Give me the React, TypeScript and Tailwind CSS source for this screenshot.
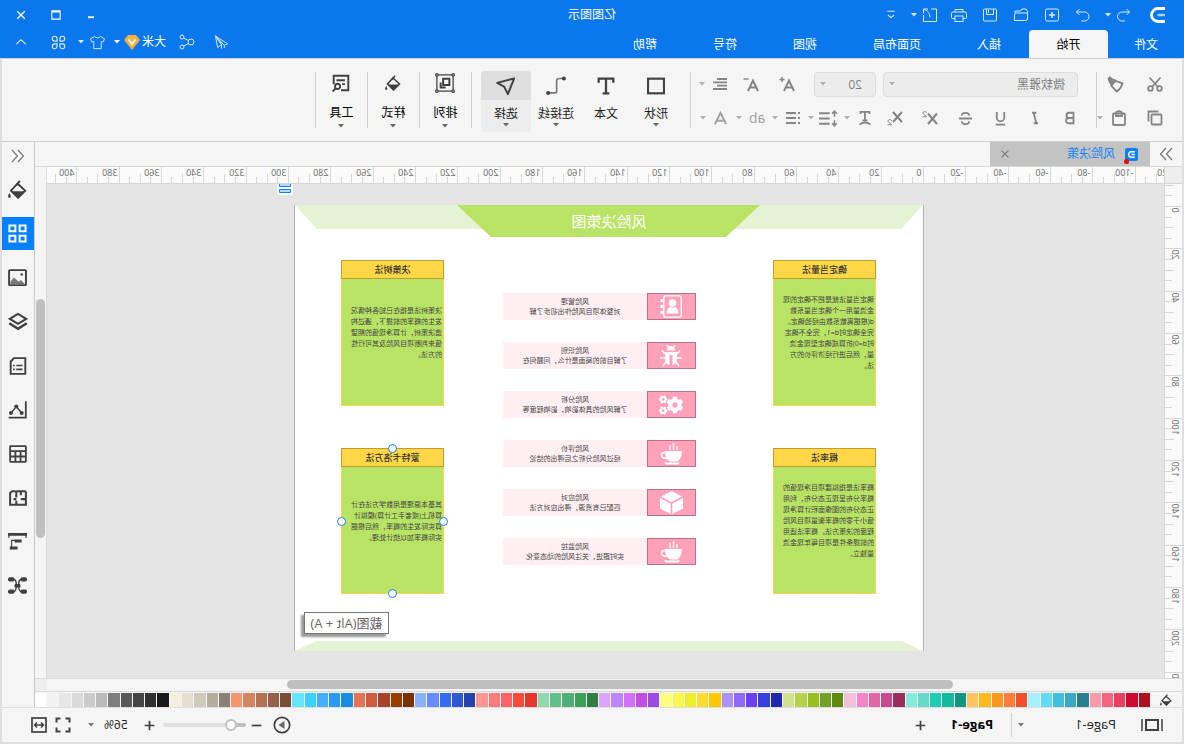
import React from "react";
import { FaCogs } from "react-icons/fa";

type IconProps = { size?: number; w?: number; children: React.ReactNode; className?: string };

function Ico({ size = 16, w = 1, children, className = "" }: IconProps) {
  return (
    <svg
      width={size}
      height={size}
      viewBox="0 0 16 16"
      fill="none"
      stroke="currentColor"
      strokeWidth={w}
      className={"shrink-0 " + className}
      aria-hidden="true"
    >
      {children}
    </svg>
  );
}

function Caret({ className = "" }: { className?: string }) {
  return (
    <svg width="6" height="4" viewBox="0 0 6 4" fill="currentColor" className={"shrink-0 " + className} aria-hidden="true">
      <path d="M0 0h6L3 3.6z" />
    </svg>
  );
}

type BtnProps = { label: string; className?: string; children: React.ReactNode };

function Btn({ label, className = "", children }: BtnProps) {
  return (
    <button type="button" aria-label={label} className={"flex shrink-0 items-center justify-center " + className}>
      {children}
    </button>
  );
}

/* ---------- title bar ---------- */

const quickTools: { label: string; icon: React.ReactNode }[] = [
  { label: "重做", icon: <path d="M11.5 2 14.5 5l-3 3M14.5 5H6.5a4.5 4.5 0 0 0 0 9h3" /> },
  { label: "新建", icon: <><rect x="1.5" y="2" width="13" height="12" rx="1.5" /><path d="M8 5v6M5 8h6" strokeWidth="1.5" /></> },
  { label: "打开", icon: <><path d="M1.5 13V4.5L3 2h4l1.500 2H14v2" /><path d="M1.5 6H12.5a2 2 0 0 1 2 2v5.500h-11a2 2 0 0 1-2-2z" /></> },
  { label: "保存", icon: <><rect x="1.5" y="2" width="13" height="12" rx="1" /><path d="M4.5 2v5.500h7V2M9.5 3v3" /></> },
  { label: "打印", icon: <><path d="M4 5V2.500h8V5M4 11.500H1.500a1 1 0 0 1-1-1V6.500A1.500 1.500 0 0 1 2 5h12a1.500 1.500 0 0 1 1.500 1.500v4a1 1 0 0 1-1 1H12" /><rect x="4" y="9" width="8" height="5.5" /></> },
];

function Header() {
  return (
    <header className="bg-[#0a78ec] text-white">
      <div className="grid h-[30px] grid-cols-[1fr_auto_1fr] items-center">
        <div className="flex items-center pl-[18px] text-[#d9eaff]">
          <svg width="16" height="16" viewBox="0 0 16 16" fill="none" className="mr-[15px] text-white" aria-hidden="true">
            <path d="M1 1.500h7a6.500 6.500 0 0 1 0 13H1" stroke="currentColor" strokeWidth="2.800" />
            <path d="M1 8h7.500" stroke="#9fd0ff" strokeWidth="2.500" />
          </svg>
          <Btn label="撤销" className="w-6"><Ico><path d="M4.500 2l-3 3 3 3M1.500 5H9a4.500 4.500 0 0 1 0 9h-3" /></Ico></Btn>
          <Caret className="mr-[6px]" />
          {quickTools.map((t) => (
            <Btn key={t.label} label={t.label} className="w-[31px]"><Ico>{t.icon}</Ico></Btn>
          ))}
          <Btn label="导出" className="w-[27px]">
            <Ico><path d="M7 2H1.500v12.500h13V8" /><path d="M10 2h4.500v4.500M14 2.500c-4 1-6 4-6 8" /></Ico>
          </Btn>
          <Caret />
          <Btn label="更多" className="ml-2 w-6"><Ico size={12}><path d="M3 3h10M4 8l4 3.500L12 8" strokeWidth="1.500" /></Ico></Btn>
        </div>
        <h1 className="text-xs">亿图图示</h1>
        <div className="flex items-center justify-end pr-1">
          <Btn label="最小化" className="w-[35px]"><Ico size={12}><path d="M4 11h8" strokeWidth="2.500" /></Ico></Btn>
          <Btn label="最大化" className="w-[35px]"><Ico size={12}><path d="M2.500 2.500h11v11h-11zM2 4h12" strokeWidth="1.400" /></Ico></Btn>
          <Btn label="关闭" className="w-[35px]"><Ico size={12}><path d="M3 3l10 10M13 3L3 13" strokeWidth="1.800" /></Ico></Btn>
        </div>
      </div>
      <div className="flex h-7">
        <nav className="flex text-xs">
          <button type="button" className="w-[76px] pt-[2px]">文件</button>
          <button type="button" className="w-[79px] rounded-t-sm bg-[#f5f5f5] pt-[2px] text-black">开始</button>
          {["插入", "页面布局", "视图", "符号", "帮助"].map((t) => (
            <button type="button" key={t} className="px-7 pt-[2px]">{t}</button>
          ))}
        </nav>
        <div className="ml-auto flex h-6 items-center pr-1 text-[#d9eaff]">
          <Btn label="发送" className="w-[34px]">
            <Ico size={15}><path d="M14.500 1 1.500 9.500l3.500 1.500zM14.500 1 12 13.500l-4-3.500zM14.500 1 8 10v4.500M5 11v3" /></Ico>
          </Btn>
          <Btn label="分享" className="w-[34px]">
            <Ico><circle cx="4" cy="8" r="3" /><circle cx="13" cy="3" r="2" /><circle cx="13" cy="13" r="2" /><path d="M6.500 6.500 11.500 4M6.500 9.500l5 2.500" /></Ico>
          </Btn>
          <button type="button" className="ml-1 flex items-center gap-[2px] text-xs text-white">
            大米
            <svg width="16" height="15" viewBox="0 0 16 15" aria-hidden="true">
              <path d="M4 0h8l4 5-8 10L0 5z" fill="#f5b041" />
              <path d="M4.500 4.500 8 9l3.500-4.500" stroke="#fff" strokeWidth="1.800" fill="none" />
            </svg>
            <Caret className="ml-[2px]" />
          </button>
          <Btn label="皮肤" className="ml-[5px] w-[22px]">
            <Ico size={15}><path d="M5 1.500C6 3.500 10 3.500 11 1.500L15.500 4 14 7.500 12 7v7.500H4V7l-2 .5L.5 4z" /></Ico>
          </Btn>
          <Caret className="ml-[3px]" />
          <Btn label="应用" className="w-[39px]">
            <Ico size={15} w={1.2}>
              <path d="M6.500 6.500h-3a2.600 2.600 0 1 1 3-3zM9.500 6.500h3a2.600 2.600 0 1 0-3-3zM6.500 9.500h-3a2.600 2.600 0 1 0 3 3zM9.500 9.500h3a2.600 2.600 0 1 1-3 3z" />
            </Ico>
          </Btn>
          <Btn label="收起功能区" className="w-[35px]"><Ico size={14}><path d="M2.500 10.500 8 5.500l5.500 5" strokeWidth="1.300" /></Ico></Btn>
        </div>
      </div>
    </header>
  );
}

/* ---------- ribbon ---------- */

function Split({ label, children }: { label: string; children: React.ReactNode }) {
  return (
    <div className="flex items-center">
      <Btn label={label} className="w-[26px]">{children}</Btn>
      <Btn label={label + "选项"} className="w-[10px] text-[#b0b0b0]"><Caret /></Btn>
    </div>
  );
}

function BigButton({ label, caret = true, active = false, children }: { label: string; caret?: boolean; active?: boolean; children: React.ReactNode }) {
  return (
    <button type="button" className={"flex h-[61px] w-[50px] flex-col items-center rounded-sm text-xs text-[#222] " + (active ? "bg-[#ededed]" : "")}>
      <span className={"flex h-[29px] w-full items-center justify-center rounded-t-sm text-[#404040] " + (active ? "bg-[#dedede]" : "")}>{children}</span>
      <span className="mt-[5px] leading-[18px]">{label}</span>
      {caret && <Caret className="text-[#666]" />}
    </button>
  );
}

function GroupButton({ label, children }: { label: string; children: React.ReactNode }) {
  return (
    <button type="button" className="flex h-14 w-[52px] flex-col items-center border-r border-[#cfcfcf] text-xs text-black">
      <span className="flex h-[22px] items-center text-[#404040]">{children}</span>
      <span className="mt-[11px] leading-[18px]">{label}</span>
      <Caret className="mt-[2px] text-[#666]" />
    </button>
  );
}

const selectBox = "h-[25px] w-full appearance-none rounded-sm border border-[#dcdcde] bg-[#ececec] text-xs text-[#808080]";

function Ribbon() {
  return (
    <section aria-label="功能区" className="flex h-[84px] items-start overflow-hidden border-x-2 border-t border-b border-x-[#dfdfdf] border-y-[#d0d0d0] bg-[#f5f5f5] pt-2">
      <div className="ml-[7px] flex flex-col text-[#858585]">
        <div className="flex h-[34px] items-center">
          <Btn label="剪切" className="w-10">
            <Ico w={1.8}><circle cx="3.500" cy="12.500" r="2.300" /><circle cx="12.500" cy="12.500" r="2.300" /><path d="M2.500 1.500 11 11M13.500 1.500 5 11" /></Ico>
          </Btn>
          <Btn label="格式刷" className="w-[38px]">
            <Ico size={17} w={1.8}><path d="M1.500 7 8 4.500 12 9 7 14.500C4.500 13 2.500 10.500 1.500 7z" /><path d="M7.500 3.500 11 2l2.500-2 2 2.500L14.500 5.500 12 9.500z" fill="currentColor" stroke="none" /></Ico>
          </Btn>
        </div>
        <div className="flex h-[34px] items-center">
          <Btn label="复制" className="w-10">
            <Ico w={1.8}><path d="M14.500 11.500v-10h-10" /><rect x="1.500" y="4.500" width="10" height="10" rx="1" /></Ico>
          </Btn>
          <Btn label="粘贴" className="w-[32px]">
            <Ico w={1.8}><rect x="2" y="3.500" width="12" height="11.500" rx="1" /><path d="M5 3.500C5 .5 11 .5 11 3.500V6H5z" /></Ico>
          </Btn>
          <Caret className="text-[#b0b0b0]" />
        </div>
      </div>
      <div className="mt-[5px] mr-2 h-14 w-px shrink-0 bg-[#cfcfcf]" />
      <div className="flex flex-col text-[#858585]">
        <div className="flex h-[34px] items-center pl-[10px]">
          <label className="relative w-[195px]">
            <select aria-label="字体" className={selectBox + " pl-3"} defaultValue="微软雅黑">
              <option>微软雅黑</option>
            </select>
            <Caret className="absolute top-[11px] right-[6px] text-[#b0b0b0]" />
          </label>
          <label className="relative ml-[7px] w-[62px]">
            <select aria-label="字号" className={selectBox + " pl-[13px]"} defaultValue="20">
              <option>20</option>
            </select>
            <Caret className="absolute top-[11px] right-[6px] text-[#b0b0b0]" />
          </label>
          <Btn label="增大字号" className="ml-[9px] w-9">
            <Ico><path d="M1 15 6 4.500 11 15M3 11.500h6" strokeWidth="2" /><path d="M13 1v5M10.500 3.500h5" strokeWidth="1.500" /></Ico>
          </Btn>
          <Btn label="减小字号" className="w-9">
            <Ico><path d="M1 15 6 4.500 11 15M3 11.500h6" strokeWidth="2" /><path d="M10.500 3h5" strokeWidth="1.500" /></Ico>
          </Btn>
          <Split label="对齐"><Ico w={1.8}><path d="M1 3h10M1 6.300h14M1 9.700h10M1 13h14" /></Ico></Split>
        </div>
        <div className="flex h-[34px] items-center">
          <Btn label="加粗" className="w-[35px]"><Ico size={14} w={2.1}><path d="M4 2h5a2.900 2.900 0 0 1 0 6H4zM4 8h5.500a3 3 0 0 1 0 6H4z" /></Ico></Btn>
          <Btn label="斜体" className="w-[35px]"><Ico size={14} w={2.1}><path d="M6.500 2h5M4.500 14h5M9.500 2l-3 12" /></Ico></Btn>
          <Btn label="下划线" className="w-[35px]"><Ico size={15} w={1.9}><path d="M4 1v6a4 4 0 0 0 8 0V1M3 14.500h10" /></Ico></Btn>
          <Btn label="删除线" className="w-[35px]"><Ico size={15} w={1.9}><path d="M12 5C12 1 4 1 4 5M4 11c0 4 8 4 8 0M1 8h14" /></Ico></Btn>
          <Btn label="上标" className="w-[35px]"><Ico><path d="M1 3.500 10 14M10 3.500 1 14" strokeWidth="2" /><path d="M11.500 3.200c0-2.200 3.500-2.200 3.500 0 0 1.500-3.500 2-3.500 3.600H15.500" /></Ico></Btn>
          <Btn label="下标" className="w-[35px]"><Ico><path d="M1 2 10 12M10 2 1 12" strokeWidth="2" /><path d="M11.500 11.200c0-2.200 3.500-2.200 3.500 0 0 1.500-3.500 2-3.500 3.600H15.500" /></Ico></Btn>
          <Split label="文字方向"><Ico w={1.8}><path d="M3.500 4V1.800h9V4M8 2v8.500M5.500 10.500h5" /><path d="M2.500 14.500c3-2.500 8-2.500 11 0" /></Ico></Split>
          <Split label="行距"><Ico size={19} w={1.7}><path d="M7 3.500h9M7 8h9M7 12.500h9" /><path d="M3 2v4.500M3 9.500V14M1 4l2-2.200L5 4M1 12l2 2.200L5 12" strokeWidth="1.300" /></Ico></Split>
          <Split label="项目符号"><Ico w={1.9}><path d="M1 3h2M1 8h2M1 13h2M5 3h10M5 8h10M5 13h10" /></Ico></Split>
          <Split label="大小写"><span className="text-sm leading-5 font-medium text-[#a0a0a0]">ab</span></Split>
          <Split label="文字颜色"><Ico size={15} w={2.1} className="text-[#a0a0a0]"><path d="M2 14 8 2l6 12M4.500 10.500h7" /></Ico></Split>
        </div>
      </div>
      <div className="mt-[5px] mr-[9px] ml-[6px] h-14 w-px shrink-0 bg-[#cfcfcf]" />
      <div className="mt-[4px] flex">
        <BigButton label="形状"><Ico size={18} w={1.9}><rect x="0.900" y="1.500" width="14.200" height="13" /></Ico></BigButton>
        <BigButton label="文本" caret={false}><Ico size={18} w={2}><path d="M1.500 5V1.500h13V5M8 1.500v13M5 14.500h6" /></Ico></BigButton>
        <BigButton label="连接线">
          <Ico size={20} w={1.3}><path d="M2 2h3.500a2 2 0 0 1 2 2v8.500a1 1 0 0 0 1 1H14" className="text-[#777]" stroke="currentColor" /><g fill="currentColor" stroke="none"><circle cx="1.700" cy="2" r="1.600" /><circle cx="14.300" cy="13.500" r="1.600" /></g></Ico>
        </BigButton>
        <BigButton label="选择" active><Ico size={20} w={1.6}><path d="M1.500 2 15 5.500 9.500 8.500 6.500 14.500z" strokeLinejoin="round" /></Ico></BigButton>
      </div>
      <div className="mt-[5px] ml-[9px] flex border-l border-[#cfcfcf]">
        <GroupButton label="排列">
          <Ico size={20}><path d="M1.500 1.500h13v13h-13z" /><path d="M4.500 4.500h5v5h-5zM11.500 7.500v4H7.500" strokeWidth="1.600" /><g fill="#f5f5f5"><circle cx="1.500" cy="1.500" r="1" /><circle cx="14.500" cy="1.500" r="1" /><circle cx="1.500" cy="14.500" r="1" /><circle cx="14.500" cy="14.500" r="1" /></g></Ico>
        </GroupButton>
        <GroupButton label="样式"><Bucket size={16} /></GroupButton>
        <GroupButton label="工具">
          <Ico size={18} w={1.7}><path d="M14.500 9V1.500h-13v13H8M4.500 5.500h7.500M4.500 9h2.500" /><circle cx="11" cy="11" r="2.300" /><path d="M12.800 12.800 15.500 15.500" /></Ico>
        </GroupButton>
      </div>
    </section>
  );
}

function Bucket({ size = 20 }: { size?: number }) {
  return (
    <Ico size={size} w={1.6}>
      <path d="M8 3 1.500 9 7.500 15 13.500 9z" />
      <path d="M2 9.500h11L7.500 15z" fill="currentColor" stroke="none" />
      <path d="M14.800 11c1.600 2.500 1.400 4 0 4s-1.600-1.500 0-4z" fill="currentColor" stroke="none" />
      <path d="M6 .8 9 4.500" />
    </Ico>
  );
}

/* ---------- rulers ---------- */

const UNIT = 2.117;

function rulerMarks(from: number, to: number): number[] {
  const out: number[] = [];
  for (let v = from; v <= to; v += 5) out.push(v);
  return out;
}

function HRuler() {
  return (
    <svg className="block h-[17px] w-full bg-[#fafafa]" aria-hidden="true">
      {rulerMarks(-120, 900).map((v) => {
        const x = Math.round(241 + v * UNIT) - 0.5;
        const top = v % 20 === 0 ? 0 : v % 10 === 0 ? 7 : 10;
        return (
          <g key={v}>
            <line x1={x} x2={x} y1={top} y2={17} stroke="#d6d6d6" />
            {v % 20 === 0 && v <= 400 && <text x={x + 2} y={9} fontSize={9} fill="#6a6a6a">{v}</text>}
          </g>
        );
      })}
    </svg>
  );
}

function VRuler() {
  return (
    <svg className="block h-full w-[17px] bg-[#fafafa]" aria-hidden="true">
      {rulerMarks(-10, 600).map((v) => {
        const y = Math.round(22 + v * UNIT) + 0.5;
        const left = v % 20 === 0 ? 0 : v % 10 === 0 ? 8 : 10;
        return (
          <g key={v}>
            <line x1={left} x2={17} y1={y} y2={y} stroke="#d6d6d6" />
            {v % 20 === 0 && v <= 220 && (
              <text transform={`translate(10 ${y + 1}) rotate(-90)`} textAnchor="end" fontSize={9} fill="#6a6a6a">{v}</text>
            )}
          </g>
        );
      })}
    </svg>
  );
}

/* ---------- diagram ---------- */

type CardProps = { title: string; lines: string[]; place: string; selected?: boolean };

function Card({ title, lines, place, selected = false }: CardProps) {
  const handle = "absolute size-[9px] rounded-full border border-[#1a80f0] bg-white";
  return (
    <article className={"absolute flex h-[146px] w-[103px] flex-col bg-[#b9e365] " + place}>
      <h3 className="h-[19px] border border-[#bf9b30] bg-[#ffd746] text-center text-[9px] leading-[17px] font-medium text-[#333]">{title}</h3>
      <p className="flex flex-1 flex-col justify-center border border-t-0 border-[#f0da50] pb-[19px] pl-px text-[7px] leading-[11px] whitespace-nowrap text-[#444]">
        {lines.map((l) => (
          <span key={l}>{l}</span>
        ))}
      </p>
      {selected && (
        <>
          <i className={handle + " -top-1 left-[47px]"} />
          <i className={handle + " -bottom-1 left-[47px]"} />
          <i className={handle + " top-[69px] -left-1"} />
          <i className={handle + " top-[69px] -right-1"} />
        </>
      )}
    </article>
  );
}

const cards: CardProps[] = [
  {
    title: "确定当量法",
    place: "left-[47px] top-[55px]",
    lines: ["确定当量法就是把不确定的现", "金流量用一个确定当量系数", "d(根据离散系数由经验确定。", "完全确定时d=1，完全不确定", "时d=0)折算成确定型现金流", "量，然后进行经济评价的方", "法。"],
  },
  {
    title: "决策树法",
    place: "left-[479px] top-[55px]",
    lines: ["决策树法是指在已知各种情况", "发生的概率的前提下，通过构", "造决策树，计算净现值的期望", "值来判断项目风险及其可行性", "的方法。"],
  },
  {
    title: "概率法",
    place: "left-[47px] top-[243px]",
    lines: ["概率法是指拟建项目净现值的", "概率分布呈现正态分布，利用", "正态分布的图像面积计算净现", "值小于零的概率衡量项目风险", "程度的决策方法。概率法适用", "的前提条件是项目每年现金流", "量独立。"],
  },
  {
    title: "蒙特卡洛方法",
    place: "left-[479px] top-[243px]",
    selected: true,
    lines: ["其基本原理是用数学方法在计", "算机上(或者手工计算)模拟计", "算实际发生的概率，然后根据", "实际概率加以统计处理。"],
  },
];

function Cup() {
  return (
    <svg width="22" height="22" viewBox="0 0 22 22" fill="#fff" aria-hidden="true">
      <path d="M0 8h17c0 6-2.500 9-5 10.500H5C2 17 0 13 0 8zM2 19.500h16l-1.500 2h-13z" />
      <path d="M16.500 9.500c5.500-1 5.500 6-1.500 6" fill="none" stroke="#fff" strokeWidth="1.500" />
      <path d="M5 3v4M8.500 0v7M12 2v5" stroke="#ffe4ea" strokeWidth="1.700" />
    </svg>
  );
}

function Contact() {
  return (
    <svg width="22" height="23" viewBox="0 0 22 23" fill="#fff" aria-hidden="true">
      <rect x="0.800" y="0.800" width="17.400" height="21.400" rx="2" fill="none" stroke="#fff" strokeWidth="1.300" />
      <circle cx="9.500" cy="8" r="3.800" />
      <path d="M3.500 18.500c0-4 2-6.500 4-6.500 1 .8 3 .8 4 0 2 0 4 2.500 4 6.500z" />
      <path d="M19 4h2.500v3H19zM19 10h2.500v3H19zM19 16h2.500v3H19z" />
    </svg>
  );
}

function Beetle() {
  return (
    <svg width="22" height="22" viewBox="0 0 22 22" fill="#fff" aria-hidden="true">
      <path d="M7 5.500a4 4.500 0 0 1 8 0zM5 7h12v7c0 3-2 5.500-4.500 6V10h-3v10C7 19.500 5 17 5 14z" />
      <path d="M8.500 2.500 7 0M13.500 2.500 15 0M5 9 2 5.500M17 9l3-3.500M5 13H0M17 13h5M6 17l-3 4M16 17l3 4" stroke="#fff" strokeWidth="1.400" />
    </svg>
  );
}

function Cube() {
  return (
    <svg width="23" height="23" viewBox="0 0 23 23" fill="#fff" aria-hidden="true">
      <path d="M11.500 0 22 5.500 11.500 11 1 5.500zM0 7l10.700 5.500V23L0 17.500zM23 7l-10.700 5.500V23L23 17.500z" />
    </svg>
  );
}

const steps: { title: string; text: string; icon: React.ReactNode }[] = [
  { title: "风险管理", text: "对整体项目风险作出初步了解", icon: <Contact /> },
  { title: "风险识别", text: "了解目前的局面是什么，问题何在", icon: <Beetle /> },
  { title: "风险分析", text: "了解风险的具体影响，影响程度等", icon: <FaCogs size={24} color="#fff" /> },
  { title: "风险评价", text: "经过风险分析之后得出的结论", icon: <Cup /> },
  { title: "风险应对", text: "匹配已有资源，得出应对方法", icon: <Cube /> },
  { title: "风险监控", text: "实时跟进，关注风险的动态变化", icon: <Cup /> },
];

function Diagram() {
  return (
    <div className="absolute top-[21px] left-[240px] h-[446px] w-[630px] border-x border-[#b0b0b0] bg-white">
      <svg className="absolute inset-0" width="628" height="446" viewBox="0 0 628 446" aria-hidden="true">
        <path d="M0 0h628l-22 24H22z" fill="#e5f3d5" />
        <path d="M163 0h303l-34 32H197z" fill="#b9e365" />
        <path d="M21 436h586l21 10H0z" fill="#e5f3d5" />
      </svg>
      <h2 className="relative text-center text-[15px] leading-8 text-white">风险决策图</h2>
      {cards.map((c) => (
        <Card key={c.title} {...c} />
      ))}
      <ol className="absolute top-[88px] left-[227px] flex flex-col gap-[22px]">
        {steps.map((s) => (
          <li key={s.title} className="flex h-[27px] w-[193px]">
            <span className="flex w-[49px] shrink-0 items-center justify-center border border-[#b9728a] bg-[#ffa2b9]">{s.icon}</span>
            <span className="flex flex-1 flex-col justify-center bg-[#ffeff3] text-center text-[7px] leading-[10px] whitespace-nowrap text-[#444]">
              <span>{s.title}</span>
              <span>{s.text}</span>
            </span>
          </li>
        ))}
      </ol>
      <div role="tooltip" className="absolute top-[407px] left-[534px] h-[22px] w-[85px] border border-[#777] bg-white text-center text-[13px] leading-5 whitespace-nowrap text-[#666] shadow-[3px_3px_2px_#999]">
        截图(Alt + A)
      </div>
    </div>
  );
}

/* ---------- palette ---------- */

const palette = (
  "b01020 cc0a2f e8405f f56580 f99aab 287f91 38a8c4 40c0de 60dcf2 a5effe f15025 ff7d3b ff971c ffba18 fec55f " +
  "129683 16b8a0 1bcdb2 66d9c8 85ecdb 9b2c5e c44b8d e265aa f884c8 f0c0dd 5f8a10 74a027 98bf20 b3d24a d3e090 " +
  "1f28b0 3340dc 6c40f2 8f6af7 ab91f8 fcc900 fcdd30 f0ec2c faf64c fdfd82 9a4be0 c24fe4 d36ffa bf85fe dba4ff " +
  "308044 3ca057 50ae78 62be8a 93d8ac e8362c fc4b3c fb6466 ff7a7a ff9490 2443a8 2f58d2 336cf2 658dff 8ab0f5 " +
  "7a3000 993a00 a84228 cf5c3e e37356 198cde 2b9af4 42b0fe 3dd2fe 66e5ff 7a4e36 96604a b4714f d4855f f4966c " +
  "8a8076 b2ad9c cfcbba e4dfd0 f4eedc 1a1a1a 303030 454545 5a5a5a 7d7d7d bbbbbb cbcbcb dadada e7e7e7 f2f2f2 ffffff"
).split(" ");

/* ---------- side tools ---------- */

const sideTools: { label: string; icon: React.ReactNode }[] = [
  { label: "填充", icon: <Bucket size={19} /> },
  { label: "符号库", icon: <Ico size={19} w={1.7}><path d="M1.200 1.200h5v5h-5zM9.800 1.200h5v5h-5zM1.200 9.800h5v5h-5zM9.800 9.800h5v5h-5z" /></Ico> },
  { label: "图片", icon: <Ico size={19} w={1.6}><rect x="0.900" y="1.800" width="14.200" height="12.600" rx="0.500" /><path d="M2 13.500 5 10l2 1.500L11 8l3 3.500v2z" fill="#777" stroke="none" /><circle cx="4.500" cy="5.500" r="1" fill="currentColor" stroke="none" /></Ico> },
  { label: "图层", icon: <Ico size={20} w={1.6}><path d="M8 1.500 14.500 5.500 8 9.500 1.500 5.500z" /><path d="M1 9l7 4.500L15 9" strokeWidth="2" /></Ico> },
  { label: "页面", icon: <Ico size={18} w={1.7}><path d="M1.500 1h10l3 3v11h-13z" /><path d="M4 7.500h5.500M4 11h5.500M10.800 7.500h1.500M10.800 11h1.500" strokeWidth="1.400" /></Ico> },
  { label: "图表", icon: <Ico size={19} w={1.5}><path d="M1 1v13.800h14.500" /><path d="M4.500 11 9 5.500 13.500 11" strokeWidth="1.200" /><g fill="currentColor" stroke="none"><circle cx="4.500" cy="11" r="1.700" /><circle cx="9" cy="5.500" r="1.700" /><circle cx="13.500" cy="11" r="1.700" /></g></Ico> },
  { label: "表格", icon: <Ico size={18} w={1.6}><rect x="1" y="1" width="14" height="14" rx="0.500" /><path d="M1 5.500h14M1 10.200h14M5.700 5.500V15M10.300 5.500V15" /></Ico> },
  { label: "平面图", icon: <Ico size={18} w={1.8}><path d="M5.500 2v3.500M1 2h8.500M10 2h3l2 1.500V14H1V2M1 9h4.500M9.500 14v-3.500M9.500 2v5.500M9.500 9H12" /></Ico> },
  { label: "甘特图", icon: <Ico size={19} w={2}><path d="M0 2h16M4.500 7.500h6M8 13.500H14.500" strokeWidth="2.500" /><path d="M.8 2v3M15.200 2v3M10 7h3v6" strokeWidth="1" /></Ico> },
  { label: "思维导图", icon: <Ico size={19}><g fill="currentColor" stroke="none"><rect x="0" y="1" width="5.500" height="3.600" rx="1.500" /><rect x="10.500" y="1" width="5.500" height="3.600" rx="1.500" /><rect x="0" y="11.400" width="5.500" height="3.600" rx="1.500" /><rect x="10.500" y="11.400" width="5.500" height="3.600" rx="1.500" /><rect x="5.500" y="6.800" width="5" height="2.800" rx="1" /></g><path d="M5 3c1.500 0 2 1 2 4.500S6 13 5 13M11 3c-1.500 0-2 1-2 4.500S10 13 11 13" strokeWidth="1.200" /></Ico> },
];

function Workspace() {
  return (
    <main className="flex min-h-0 flex-1 border-x-2 border-[#dfdfdf] bg-[#f5f5f5]">
      <div className="flex min-w-0 flex-1 flex-col">
        <div className="flex h-[25px] border-b border-[#d8d8d8] text-[#777]">
          <Btn label="展开左侧面板" className="w-8">
            <svg width="14" height="14" viewBox="0 0 14 14" fill="none" stroke="currentColor" strokeWidth="1.200" aria-hidden="true">
              <path d="M1 1l5.500 6L1 13M7 1l5.500 6L7 13" />
            </svg>
          </Btn>
          <div className="flex w-[160px] items-center bg-[#c3c3c3] pl-3">
            <span className="relative flex size-[13px] items-center justify-center rounded-[2px] bg-[#0b80f8]">
              <Ico size={9} w={2.5} className="text-white"><path d="M2 3h6a5 5 0 0 1 0 10H2M2 8h6" /></Ico>
              <i className="absolute -right-px -bottom-[3px] size-[5px] rounded-full bg-[#f00000]" />
            </span>
            <button type="button" className="ml-[10px] text-xs text-[#1383f5]">风险决策</button>
            <Btn label="关闭标签" className="mr-[10px] ml-auto"><Ico size={10} w={1.7}><path d="M2.500 2.500l11 11M13.500 2.500l-11 11" /></Ico></Btn>
          </div>
        </div>
        <div className="flex min-h-0 flex-1">
          <div className="flex w-[18px] shrink-0 flex-col border-r border-[#d6d6d6]">
            <div className="h-[17px] shrink-0 border-b border-[#d6d6d6] bg-[#eee]" />
            <div className="min-h-0 flex-1 overflow-hidden"><VRuler /></div>
          </div>
          <div className="flex min-w-0 flex-1 flex-col">
            <div className="h-[17px] shrink-0 overflow-hidden border-b border-[#d6d6d6]"><HRuler /></div>
            <div className="relative min-h-0 flex-1 overflow-hidden bg-[#e4e4e4]">
              <Diagram />
              <svg className="absolute top-0 left-[871px]" width="16" height="11" aria-hidden="true">
                <rect width="16" height="11" fill="#fff" />
                <path d="M2.500-1v3.500h11V-1zM2.500 5.500h11v3h-11z" fill="#b5d8ff" stroke="#0a80f8" />
              </svg>
            </div>
          </div>
          <div className="w-3 shrink-0 border-l border-[#dcdcdc] px-px pt-[132px]">
            <div className="h-[239px] rounded-md bg-[#bfbfbf]" />
          </div>
        </div>
        <div className="flex h-[13px] border-t border-[#dcdcdc]">
          <div className="ml-[18px] flex-1 pt-px pr-[20.9%] pl-[18.4%]">
            <div className="h-[9px] rounded-md bg-[#bfbfbf]" />
          </div>
          <div className="w-3 bg-[#eee]" />
        </div>
        <div className="flex h-4 items-center border-t border-[#d8d8d8]">
          <Btn label="填充颜色" className="w-8 text-[#404040]"><Bucket size={12} /></Btn>
          <div className="flex h-[14px] flex-1 gap-px">
            {palette.map((c) => (
              <button type="button" key={c} aria-label={"#" + c} className="flex-1" style={{ backgroundColor: "#" + c }} />
            ))}
          </div>
        </div>
      </div>
      <aside className="flex w-[33px] shrink-0 flex-col border-l border-[#c8c8c8] text-[#404040]">
        <Btn label="收起右侧面板" className="mb-[3px] h-[28px] text-[#777]">
          <svg width="14" height="14" viewBox="0 0 14 14" fill="none" stroke="currentColor" strokeWidth="1.200" aria-hidden="true">
            <path d="M7 1 1.500 7 7 13M13 1 7.500 7 13 13" />
          </svg>
        </Btn>
        <div className="flex flex-col gap-[11px]">
          {sideTools.map((t) => (
            <Btn key={t.label} label={t.label} className={"h-[33px] " + (t.label === "符号库" ? "bg-[#0580fc] text-white" : "")}>{t.icon}</Btn>
          ))}
        </div>
      </aside>
    </main>
  );
}

/* ---------- status bar ---------- */

function StatusBar() {
  return (
    <footer className="flex h-[37px] shrink-0 items-center border-x-2 border-t border-b-2 border-[#dfdfdf] bg-[#f5f5f5] text-[13px] text-black">
      <Btn label="页面视图" className="ml-[18px] w-6 text-[#404040]">
        <svg width="22" height="14" viewBox="0 0 22 14" fill="none" stroke="currentColor" aria-hidden="true">
          <rect x="5" y="2" width="12" height="10" strokeWidth="2" />
          <path d="M1 1v12M21 1v12" strokeWidth="1.500" />
        </svg>
      </Btn>
      <button type="button" className="ml-[24px] flex w-[98px] items-center justify-between text-[#222]">
        Page-1
        <Caret className="text-[#777]" />
      </button>
      <div className="ml-[6px] h-6 w-px bg-[#d0d0d0]" />
      <button type="button" className="ml-[17px] w-[44px] font-bold">Page-1</button>
      <Btn label="新增页面" className="ml-[21px] w-4"><Ico size={11} w={2.5} className="text-[#404040]"><path d="M8 1v14M1 8h14" /></Ico></Btn>
      <div className="ml-auto flex items-center text-[#404040]">
        <Btn label="播放" className="w-[18px]">
          <svg width="18" height="18" viewBox="0 0 18 18" fill="none" aria-hidden="true">
            <circle cx="9" cy="9" r="7.700" stroke="currentColor" strokeWidth="1.700" />
            <path d="M6.500 5v8l6-4z" fill="#666" />
          </svg>
        </Btn>
        <Btn label="缩小" className="ml-[10px] w-3"><Ico size={11} w={2.5}><path d="M1 8h14" /></Ico></Btn>
        <input
          type="range"
          aria-label="缩放"
          min={0}
          max={100}
          defaultValue={12}
          className="mx-[5px] h-1 w-[83px] appearance-none rounded-full bg-[linear-gradient(to_right,#bfbfbf_16%,#e0e0e0_16%)] [&::-webkit-slider-thumb]:size-3 [&::-webkit-slider-thumb]:appearance-none [&::-webkit-slider-thumb]:rounded-full [&::-webkit-slider-thumb]:border-2 [&::-webkit-slider-thumb]:border-[#bfbfbf] [&::-webkit-slider-thumb]:bg-white"
        />
        <Btn label="放大" className="w-4"><Ico size={11} w={2.5}><path d="M8 1v14M1 8h14" /></Ico></Btn>
        <button type="button" className="ml-[14px] flex items-center gap-[10px] text-xs text-[#222]">
          56%
          <Caret className="text-[#777]" />
        </button>
        <Btn label="全屏" className="ml-[17px] w-4"><Ico w={2}><path d="M1.500 5.500v-4h4M10.500 1.500h4v4M14.500 10.500v4h-4M5.500 14.500h-4v-4" /></Ico></Btn>
        <Btn label="适合宽度" className="mr-[29px] ml-2 w-4"><Ico w={1.7}><rect x="1" y="1" width="14" height="14" /><path d="M3.500 8h9M6 5.500 3.500 8 6 10.500M10 5.500 12.500 8 10 10.500" strokeWidth="1.500" /></Ico></Btn>
      </div>
    </footer>
  );
}

export default function App() {
  return (
    <div className="flex h-screen min-h-[600px] -scale-x-100 flex-col overflow-hidden bg-[#f5f5f5] font-['Open_Sans','Noto_Sans_CJK_SC',sans-serif]">
      <Header />
      <Ribbon />
      <Workspace />
      <StatusBar />
    </div>
  );
}
